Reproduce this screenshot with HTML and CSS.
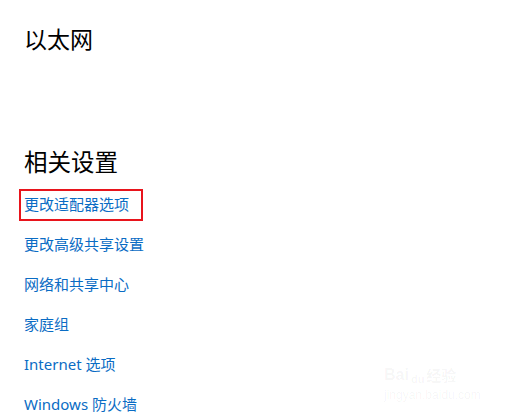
FILE: index.html
```html
<!DOCTYPE html>
<html lang="zh-CN">
<head>
<meta charset="utf-8">
<link rel="stylesheet" href="styles.css">
</head>
<body>
<main class="page">
  <h1 class="title">以太网</h1>
  <section class="related">
    <h2 class="heading">相关设置</h2>
    <ul class="links">
      <li><a class="link highlighted" href="#">更改适配器选项</a></li>
      <li><a class="link" href="#">更改高级共享设置</a></li>
      <li><a class="link" href="#">网络和共享中心</a></li>
      <li><a class="link" href="#">家庭组</a></li>
      <li><a class="link" href="#">Internet 选项</a></li>
      <li><a class="link" href="#">Windows 防火墙</a></li>
    </ul>
  </section>
</main>
<div class="watermark">
  <div class="wm-top"><span class="wm-bai">Bai</span><span class="wm-du">du</span><span class="wm-jy">经验</span></div>
  <div class="wm-url">jingyan.baidu.com</div>
</div>
</body>
</html>
```
FILE: styles.css
```css
html, body {
  margin: 0;
  padding: 0;
  background: #ffffff;
  width: 505px;
  height: 418px;
  overflow: hidden;
}
body {
  font-family: "Noto Sans", "Noto Sans CJK SC", sans-serif;
  position: relative;
}
.page {
  padding: 22px 0 0 24px;
}
.title {
  margin: 0;
  font-family: "Noto Sans CJK SC", sans-serif;
  font-weight: 400;
  font-size: 23px;
  line-height: 32px;
  color: #000;
  height: 32px;
}
.related {
  margin-top: 91px;
}
.heading {
  margin: 0;
  font-family: "Noto Sans CJK SC", sans-serif;
  font-weight: 400;
  font-size: 23.5px;
  line-height: 32px;
  color: #000;
}
.links {
  list-style: none;
  margin: 16px 0 0 0;
  padding: 0;
  display: flex;
  flex-direction: column;
  gap: 20px;
}
.links li {
  height: 20px;
}
.link {
  font-family: "Noto Sans", "Noto Sans CJK SC", sans-serif;
  font-size: 15px;
  line-height: 20px;
  color: #0a6cc4;
  text-decoration: none;
  display: inline-block;
  position: relative;
}
.highlighted::after {
  content: "";
  position: absolute;
  left: -5px;
  top: -5px;
  width: 120px;
  height: 28px;
  border: 2px solid #e8141c;
}
.watermark {
  position: absolute;
  left: 384px;
  top: 362px;
  color: rgba(0, 0, 0, 0.045);
  font-family: "Liberation Sans", sans-serif;
}
.wm-top {
  display: flex;
  align-items: flex-end;
  font-size: 16px;
  font-weight: bold;
  line-height: 26px;
}
.wm-du {
  font-size: 11px;
  margin: 0 2px;
  line-height: 18px;
}
.wm-jy {
  font-family: "Noto Sans CJK SC", sans-serif;
  font-size: 15px;
}
.wm-url {
  font-size: 12px;
  line-height: 14px;
}
```
